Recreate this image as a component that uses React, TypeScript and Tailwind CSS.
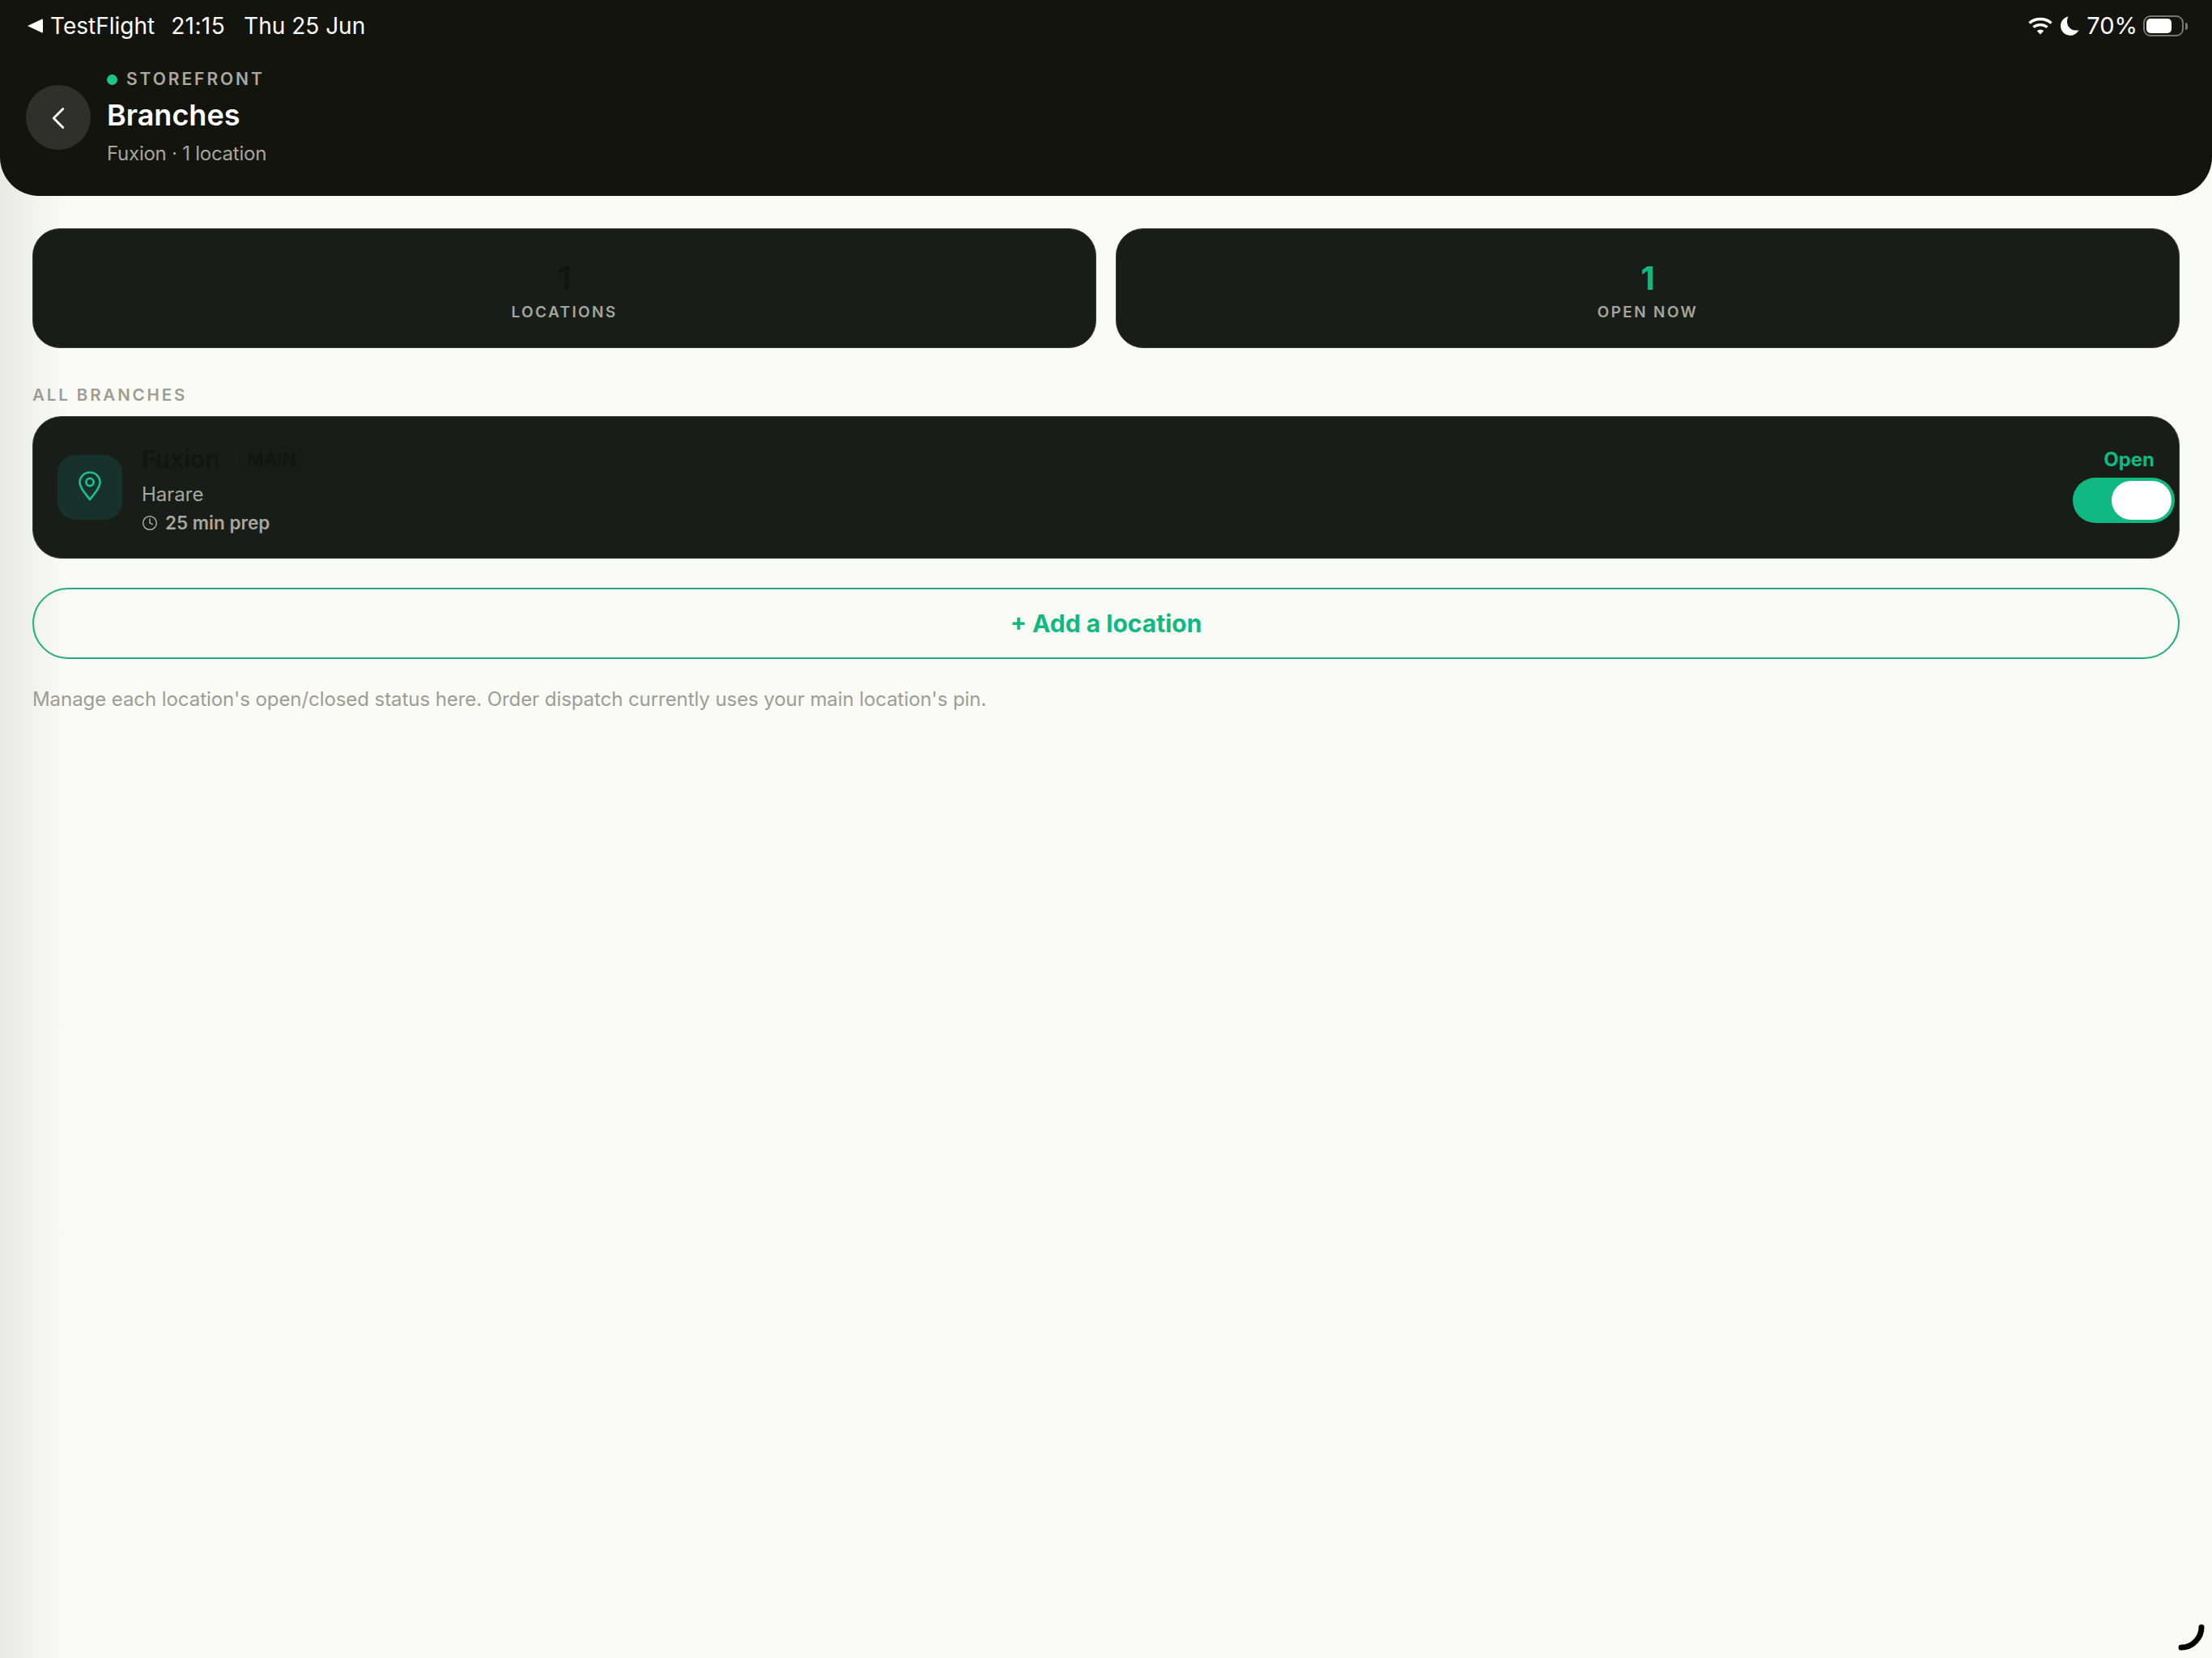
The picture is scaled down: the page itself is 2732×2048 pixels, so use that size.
import { ChevronLeft, Clock } from "lucide-react";

function WifiIcon() {
  return (
    <svg width="30" height="22" viewBox="0 0 30 22" fill="none" stroke="#fff" strokeWidth="3.4">
      <path d="M1.5 7.5C9 0.8 21 0.8 28.5 7.5" />
      <path d="M6.5 12.5C11 8.6 19 8.6 23.5 12.5" />
      <path d="M15 21.5L10.8 17.2C13 15.4 17 15.4 19.2 17.2Z" fill="#fff" stroke="none" />
    </svg>
  );
}

function MoonIcon() {
  return (
    <svg width="23" height="24" viewBox="0 0 23 24" fill="#fff">
      <path d="M9.5 0.5C3.8 1.6 0 6.4 0 12c0 6.5 5.2 11.8 11.7 11.8 4.8 0 8.9-2.8 10.8-6.9-1 .4-2.4.6-3.6.6C12.6 17.5 8 12.8 8 6.5c0-2.2.5-4.2 1.5-6z" />
    </svg>
  );
}

function Battery() {
  return (
    <div className="flex items-center gap-[2px]">
      <div className="w-[50px] h-[26px] rounded-[9px] border-[2px] border-[#77776f] p-[2px]">
        <div className="w-[31px] h-full rounded-[5px] bg-white" />
      </div>
      <div className="w-[3px] h-[9px] rounded-r-full bg-[#77776f]" />
    </div>
  );
}

function PinIcon() {
  return (
    <svg width="28" height="37" viewBox="0 0 28 37" fill="none" stroke="#1fbf8a" strokeWidth="2.6" strokeLinejoin="round">
      <path d="M14 35C9 28.5 1.5 21 1.5 14a12.5 12.5 0 0 1 25 0C26.5 21 19 28.5 14 35z" />
      <circle cx="14" cy="13.5" r="4.6" />
    </svg>
  );
}

function StatCard({ value, label, valueColor }: { value: string; label: string; valueColor: string }) {
  return (
    <div className="flex-1 h-[148px] rounded-[34px] bg-[#181d1a] border border-[#3a3e3a] flex flex-col items-center pt-[38px]">
      <span className={`text-[40px] leading-[46px] font-bold ${valueColor}`}>{value}</span>
      <span className="mt-[7px] text-[19px] leading-[24px] font-semibold tracking-[0.125em] text-[#a3a69b]">{label}</span>
    </div>
  );
}

export default function App() {
  return (
    <div className="relative w-[2732px] h-[2048px] overflow-hidden bg-[#fafbf6] font-['Inter',sans-serif]">
      <div className="absolute inset-y-0 left-0 w-[80px] bg-gradient-to-r from-[#e9eae6] to-transparent" />

      <header className="relative h-[242px] bg-[#14140f] rounded-b-[48px] text-white">
        <div className="flex items-center justify-between h-[64px] pl-[34px] pr-[30px] text-[28px]">
          <div className="flex items-center">
            <svg width="19" height="18" viewBox="0 0 19 18" fill="#fff">
              <path d="M0 9L18 0.5a1 1 0 0 1 1 1v15a1 1 0 0 1-1 1z" />
            </svg>
            <span className="ml-[9px]">TestFlight</span>
            <span className="ml-[20px] tracking-[0.4px]">21:15</span>
            <span className="ml-[23px]">Thu 25 Jun</span>
          </div>
          <div className="flex items-center">
            <WifiIcon />
            <span className="ml-[10px]"><MoonIcon /></span>
            <span className="ml-[9px] text-[29px]">70%</span>
            <span className="ml-[7px]"><Battery /></span>
          </div>
        </div>

        <div className="flex items-center pl-[32px]">
          <div className="w-[80px] h-[80px] mt-[18px] rounded-full bg-[#2f2f2c] flex items-center justify-center">
            <span className="mt-[2px]"><ChevronLeft size={46} strokeWidth={1.5} color="#ffffff" /></span>
          </div>
          <div className="ml-[20px] pt-[16px] flex flex-col">
            <div className="flex items-center h-[32px] mt-[2px]">
              <span className="w-[13px] h-[13px] rounded-full bg-[#1fc48d]" />
              <span className="ml-[11px] text-[21px] font-semibold tracking-[0.14em] text-[#a9a99f]">STOREFRONT</span>
            </div>
            <div className="h-[48px] mt-[4px] flex items-center text-[36px] font-semibold">Branches</div>
            <div className="h-[36px] mt-[6px] flex items-center text-[24px] tracking-[-0.25px] text-[#a6a69c]">Fuxion · 1 location</div>
          </div>
        </div>
      </header>

      <main className="relative px-[40px]">
        <div className="flex gap-[24px] pt-[40px]">
          <StatCard value="1" label="LOCATIONS" valueColor="text-[#141510]" />
          <StatCard value="1" label="OPEN NOW" valueColor="text-[#10b981]" />
        </div>

        <div className="mt-[46px] h-[24px] flex items-center text-[20.5px] font-semibold tracking-[0.14em] text-[#9c9d93]">ALL BRANCHES</div>

        <div className="mt-[14px] h-[176px] rounded-[36px] bg-[#181d1a] border border-[#3a3e3a] flex items-center pl-[30px] pr-[30px]">
          <div className="w-[80px] h-[80px] rounded-[22px] bg-[#16322a] flex items-center justify-center">
            <span className="mb-[4px]"><PinIcon /></span>
          </div>
          <div className="ml-[24px] pt-[8px] flex flex-col">
            <div className="flex items-center h-[36px]">
              <span className="text-[30px] font-semibold text-[#141510]">Fuxion</span>
              <span className="ml-[22px] px-[12px] h-[36px] rounded-full bg-[#171c19] flex items-center text-[22px] font-bold text-[#141510]">MAIN</span>
            </div>
            <div className="mt-[8px] h-[34px] flex items-center text-[24px] text-[#a6a89e]">Harare</div>
            <div className="mt-[1px] h-[34px] flex items-center text-[22.5px] font-semibold text-[#a6a89e]">
              <Clock size={20} strokeWidth={1.8} />
              <span className="ml-[9px]">25 min prep</span>
            </div>
          </div>
          <div className="ml-auto pb-[6px] flex flex-col items-end">
            <span className="h-[32px] flex items-center text-[24px] font-bold text-[#10b981]">Open</span>
            <div className="mt-[6px] mr-[-25px] w-[126px] h-[56px] rounded-full bg-[#10b981] flex items-center justify-end pr-[4px]">
              <div className="w-[74px] h-[48px] rounded-full bg-white" />
            </div>
          </div>
        </div>

        <button className="mt-[36px] w-full h-[88px] rounded-full border-[2px] border-[#1fae80] text-[30px] font-bold text-[#10b981] flex items-center justify-center">
          + Add a location
        </button>

        <p className="mt-[32px] text-[24px] leading-[36px] tracking-[-0.07px] text-[#9c9d95]">
          Manage each location's open/closed status here. Order dispatch currently uses your main location's pin.
        </p>
      </main>

      <svg className="absolute right-[8px] bottom-[8px]" width="34" height="34" viewBox="0 0 34 34" fill="none">
        <path d="M29 4C29 17 18 29 4 29" stroke="#000" strokeWidth="7" strokeLinecap="round" />
      </svg>
    </div>
  );
}
